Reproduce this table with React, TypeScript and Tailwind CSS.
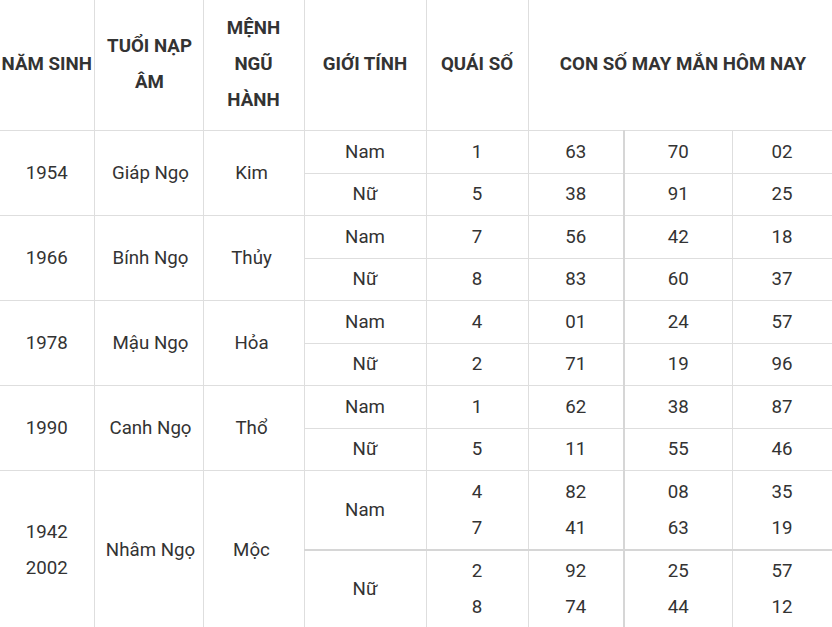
import { Fragment } from "react";

type Gender = {
    label: string;
    quai: string[];
    nums: string[][];
};

type Group = {
    years: string[];
    napAm: string;
    menh: string;
    rows: Gender[];
};

const groups: Group[] = [
    {
        years: ["1954"],
        napAm: "Giáp Ngọ",
        menh: "Kim",
        rows: [
            { label: "Nam", quai: ["1"], nums: [["63"], ["70"], ["02"]] },
            { label: "Nữ", quai: ["5"], nums: [["38"], ["91"], ["25"]] },
        ],
    },
    {
        years: ["1966"],
        napAm: "Bính Ngọ",
        menh: "Thủy",
        rows: [
            { label: "Nam", quai: ["7"], nums: [["56"], ["42"], ["18"]] },
            { label: "Nữ", quai: ["8"], nums: [["83"], ["60"], ["37"]] },
        ],
    },
    {
        years: ["1978"],
        napAm: "Mậu Ngọ",
        menh: "Hỏa",
        rows: [
            { label: "Nam", quai: ["4"], nums: [["01"], ["24"], ["57"]] },
            { label: "Nữ", quai: ["2"], nums: [["71"], ["19"], ["96"]] },
        ],
    },
    {
        years: ["1990"],
        napAm: "Canh Ngọ",
        menh: "Thổ",
        rows: [
            { label: "Nam", quai: ["1"], nums: [["62"], ["38"], ["87"]] },
            { label: "Nữ", quai: ["5"], nums: [["11"], ["55"], ["46"]] },
        ],
    },
    {
        years: ["1942", "2002"],
        napAm: "Nhâm Ngọ",
        menh: "Mộc",
        rows: [
            {
                label: "Nam",
                quai: ["4", "7"],
                nums: [["82", "41"], ["08", "63"], ["35", "19"]],
            },
            {
                label: "Nữ",
                quai: ["2", "8"],
                nums: [["92", "74"], ["25", "44"], ["57", "12"]],
            },
        ],
    },
];

const cell = "border border-[#dedede] text-center align-middle py-[2.75px] leading-9 font-normal";
const head = "border border-[#dedede] border-t-0 pt-[10px] pb-[12px] leading-9 font-bold text-center align-middle";

const Lines = ({ items }: { items: string[] }) => (
    <>
        {items.map((t, i) => (
            <div key={i}>{t}</div>
        ))}
    </>
);

const App = () => {
    return (
        <div
            className="w-[832px] h-[627px] overflow-hidden bg-white text-[#333333] text-[18.7px]"
            style={{ fontFamily: "Roboto, 'Noto Sans', sans-serif" }}
        >
            <table className="w-[832px] table-fixed border-collapse">
                <colgroup>
                    <col className="w-[94px]" />
                    <col className="w-[109px]" />
                    <col className="w-[101px]" />
                    <col className="w-[122px]" />
                    <col className="w-[102px]" />
                    <col className="w-[96px]" />
                    <col className="w-[108px]" />
                    <col className="w-[100px]" />
                </colgroup>
                <thead>
                    <tr>
                        <th className={`${head} border-l-0`}>NĂM SINH</th>
                        <th className={`${head} pl-[2px]`}>
                            TUỔI NẠP
                            <br />
                            ÂM
                        </th>
                        <th className={head}>
                            MỆNH
                            <br />
                            NGŨ
                            <br />
                            HÀNH
                        </th>
                        <th className={head}>GIỚI TÍNH</th>
                        <th className={head}>QUÁI SỐ</th>
                        <th colSpan={3} className={`${head} pl-[6px]`}>
                            CON SỐ MAY MẮN HÔM NAY
                        </th>
                    </tr>
                </thead>
                <tbody>
                    {groups.map((g) => (
                        <Fragment key={g.napAm}>
                            {g.rows.map((r, ri) => {
                                // the second gender row of the last group has a heavier divider
                                const heavy = g.years.length > 1 && ri === 1 ? "border-t-2 border-t-[#d6d6d6]" : "";
                                return (
                                    <tr key={r.label}>
                                        {ri === 0 && (
                                            <>
                                                <td rowSpan={2} className={`${cell} border-l-0`}>
                                                    <Lines items={g.years} />
                                                </td>
                                                <td rowSpan={2} className={`${cell} pl-[4px]`}>
                                                    {g.napAm}
                                                </td>
                                                <td rowSpan={2} className={`${cell} pr-[4px]`}>
                                                    {g.menh}
                                                </td>
                                            </>
                                        )}
                                        <td className={`${cell} ${heavy}`}>{r.label}</td>
                                        <td className={`${cell} ${heavy}`}>
                                            <Lines items={r.quai} />
                                        </td>
                                        <td className={`${cell} ${heavy}`}>
                                            <Lines items={r.nums[0]} />
                                        </td>
                                        <td className={`${cell} ${heavy} border-l-2 border-l-[#d6d6d6]`}>
                                            <Lines items={r.nums[1]} />
                                        </td>
                                        <td className={`${cell} ${heavy}`}>
                                            <Lines items={r.nums[2]} />
                                        </td>
                                    </tr>
                                );
                            })}
                        </Fragment>
                    ))}
                </tbody>
            </table>
        </div>
    );
};

export default App;
